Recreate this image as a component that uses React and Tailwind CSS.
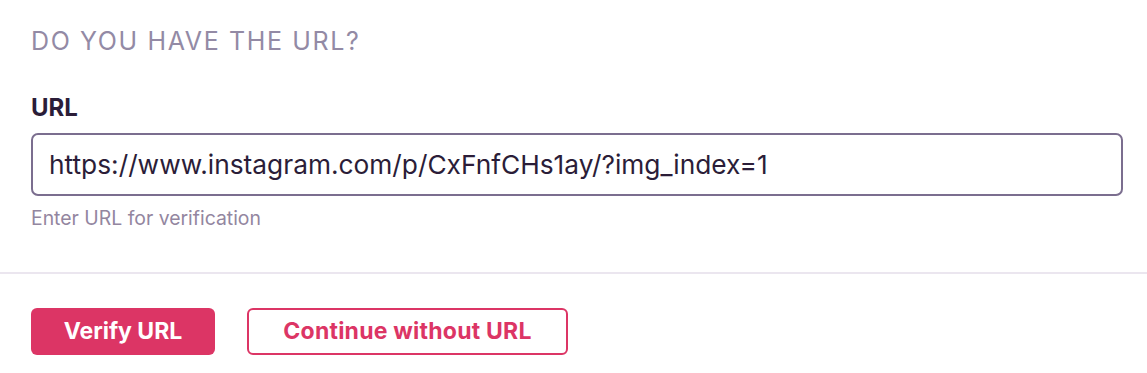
import React, { useState } from "react";

export default function App() {
  const [url, setUrl] = useState(
    "https://www.instagram.com/p/CxFnfCHs1ay/?img_index=1",
  );

  return (
    <div className="min-h-screen bg-white font-['Inter',sans-serif]">
      {/* URL SECTION */}
      <div className="px-[31px] pt-[25px] pb-[42px]">
        <h2 className="text-[25px] leading-[32px] tracking-[0.065em] uppercase text-[#938aa5] font-normal">
          Do you have the URL?
        </h2>

        <label className="block mt-[37px] text-[24px] leading-[28px] font-bold text-[#2b1d38]">
          URL
        </label>
        <input
          type="text"
          value={url}
          onChange={(e) => setUrl(e.target.value)}
          autoFocus
          className="mt-[11px] block w-[1092px] h-[63px] border-2 border-[#7b6e8f] rounded-[7px] pl-[16px] pr-4 text-[26.3px] text-[#2b1d38] outline-none caret-[#2b1d38]"
        />
        <p className="mt-[10px] text-[19.4px] leading-[24px] text-[#9386a0]">
          Enter URL for verification
        </p>
      </div>

      <div className="border-t-2 border-[#ebe6ef]" />

      {/* ACTIONS */}
      <div className="px-[31px] pt-[34px] flex gap-[32px]">
        <button className="h-[47px] w-[184px] rounded-[6px] bg-[#dc3565] text-white text-[23px] font-bold">
          Verify URL
        </button>
        <button className="h-[47px] w-[321px] rounded-[6px] border-2 border-[#dc3565] bg-white text-[#dc3565] text-[23px] font-bold tracking-[0.01em]">
          Continue without URL
        </button>
      </div>
    </div>
  );
}
